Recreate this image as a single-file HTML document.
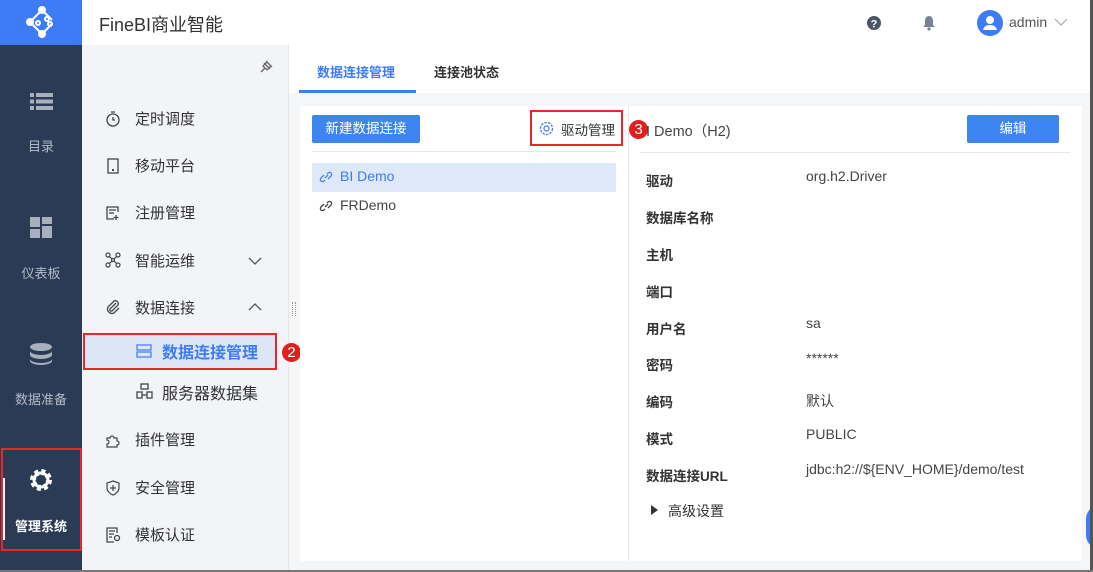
<!DOCTYPE html>
<html><head><meta charset="utf-8"><style>
*{margin:0;padding:0;box-sizing:border-box}
body{width:1093px;height:572px;overflow:hidden;font-family:"Liberation Sans","Noto Sans CJK SC",sans-serif;background:#f5f6f8;position:relative;color:#333}
.abs{position:absolute}
.rail{left:0;top:0;width:82px;height:572px;background:#2b3a55}
.logo{left:0;top:0;width:82px;height:45px;background:#3e7cf6}
.top{left:82px;top:0;width:1011px;height:45px;background:#fff;box-shadow:0 2px 4px rgba(0,0,0,.05)}
.side{left:82px;top:45px;width:207px;height:527px;background:#f2f4f7;border-right:1px solid #e4e6ea}
.rl{position:absolute;width:82px;text-align:center;color:#b3bac6;font-size:13px}
.mi{position:absolute;left:135px;font-size:15px;color:#333}
.ic{position:absolute;left:105px;width:16px;height:16px}
.tabs{left:289px;top:45px;width:804px;height:48px;background:#fff}
.panel{left:300px;top:106px;width:782px;height:455px;background:#fff}
.lab{position:absolute;left:646px;font-size:13.5px;font-weight:bold;color:#333}
.val{position:absolute;left:806px;font-size:14px;color:#444}
.badge{position:absolute;width:19px;height:19px;border-radius:50%;background:#e02020;color:#fff;font-size:15px;text-align:center;line-height:19px}
.red{position:absolute;border:2px solid #e8262b}
</style></head><body>
<div class="abs rail"></div>
<div class="abs logo"><svg width="82" height="45"><g fill="#fff" stroke="#fff" stroke-width="2"><line x1="30" y1="22" x2="42" y2="10"/><line x1="30" y1="22" x2="42" y2="34"/><line x1="42" y1="10" x2="52" y2="20"/><line x1="42" y1="34" x2="52" y2="24"/><circle cx="30" cy="22" r="3"/><circle cx="42" cy="10" r="3"/><circle cx="42" cy="34" r="3"/><circle cx="47" cy="19" r="2" fill="none"/><circle cx="50" cy="24" r="2" fill="none"/><circle cx="38" cy="23" r="2" fill="none"/></g></svg></div>
<div class="abs top"><div class="abs" style="left:17px;top:11px;font-size:18px;color:#333">FineBI商业智能</div>
<svg class="abs" style="left:784px;top:15px" width="16" height="16"><circle cx="8" cy="8" r="7" fill="#4d5566"/><text x="8" y="12.5" text-anchor="middle" font-size="11" font-weight="bold" fill="#fff" font-family="Liberation Sans">?</text></svg>
<svg class="abs" style="left:840px;top:15px" width="14" height="16"><path d="M7 1c-3 0-4 3-4 5v4l-2 2h12l-2-2V6c0-2-1-5-4-5z" fill="#7a8190"/><circle cx="7" cy="14" r="1.6" fill="#7a8190"/></svg>
<svg class="abs" style="left:895px;top:10px" width="26" height="26"><circle cx="13" cy="13" r="13" fill="#3e7cf6"/><circle cx="13" cy="10" r="4" fill="#fff"/><path d="M6 20c1-4 4-5 7-5s6 1 7 5z" fill="#fff"/></svg>
<div class="abs" style="left:927px;top:14px;font-size:14px;color:#555">admin</div>
<svg class="abs" style="left:972px;top:18px" width="14" height="8"><path d="M1 1l6 6 6-6" fill="none" stroke="#aaa" stroke-width="1.2"/></svg>
</div>
<svg class="abs" style="left:30px;top:93px" width="24" height="17" fill="#a9b0bd"><rect x="0" y="0" width="4" height="4"/><rect x="6" y="0" width="17" height="4"/><rect x="0" y="6.5" width="4" height="4"/><rect x="6" y="6.5" width="17" height="4"/><rect x="0" y="13" width="4" height="4"/><rect x="6" y="13" width="17" height="4"/></svg>
<div class="rl" style="top:136px">目录</div>
<svg class="abs" style="left:30px;top:217px" width="22" height="21" fill="#a9b0bd"><rect x="0" y="0" width="10" height="10"/><rect x="12" y="0" width="10" height="7"/><rect x="0" y="12" width="10" height="9"/><rect x="12" y="9" width="10" height="12"/></svg>
<div class="rl" style="top:263px">仪表板</div>
<svg class="abs" style="left:30px;top:343px" width="22" height="22" fill="#a9b0bd"><ellipse cx="11" cy="4" rx="11" ry="4"/><path d="M0 8c0 2 5 4 11 4s11-2 11-4v4c0 2-5 4-11 4S0 14 0 12z"/><path d="M0 16c0 2 5 4 11 4s11-2 11-4v2c0 2-5 4-11 4S0 20 0 18z"/></svg>
<div class="rl" style="top:389px">数据准备</div>
<div class="abs" style="left:2px;top:478px;width:3px;height:62px;background:#fff"></div>
<svg class="abs" style="left:29px;top:468px" width="24" height="24"><circle cx="12" cy="12" r="8" fill="none" stroke="#fff" stroke-width="6" stroke-dasharray="3.5 2.8"/><circle cx="12" cy="12" r="7" fill="none" stroke="#fff" stroke-width="3"/></svg>
<div class="rl" style="top:516px;color:#fff;font-weight:bold">管理系统</div>
<div class="red" style="left:1px;top:448px;width:81px;height:103px"></div>
<div class="badge" style="left:91px;top:488px">1</div>
<div class="abs side"></div>
<svg class="abs" style="left:258px;top:59px" width="16" height="16"><path d="M3 13l4-4M6 4l6 6M8 2l6 6M5 7l4-4 4 4-4 4z" stroke="#666" stroke-width="1.3" fill="none"/></svg>
<svg class="ic" style="top:111px" viewBox="0 0 16 16"><circle cx="8" cy="9" r="6" fill="none" stroke="#444" stroke-width="1.3"/><path d="M8 6v3h2M6 1h4" stroke="#444" stroke-width="1.3" fill="none"/></svg>
<div class="mi" style="top:108px">定时调度</div>
<svg class="ic" style="top:158px" viewBox="0 0 16 16"><rect x="3" y="1" width="10" height="14" fill="none" stroke="#444" stroke-width="1.3"/><rect x="7" y="11" width="2" height="2" fill="#444"/></svg>
<div class="mi" style="top:155px">移动平台</div>
<svg class="ic" style="top:205px" viewBox="0 0 16 16"><path d="M13 7V2H2v12h7M4 5h7M4 8h5M11 10v5M8.5 12.5h5" stroke="#444" stroke-width="1.3" fill="none"/></svg>
<div class="mi" style="top:202px">注册管理</div>
<svg class="ic" style="top:252px" viewBox="0 0 16 16"><g stroke="#444" stroke-width="1.2" fill="none"><circle cx="3" cy="3" r="2"/><circle cx="13" cy="3" r="2"/><circle cx="3" cy="13" r="2"/><circle cx="13" cy="13" r="2"/><circle cx="8" cy="8" r="1.5"/><path d="M4.5 4.5l2.5 2.5M11.5 4.5l-2.5 2.5M4.5 11.5l2.5-2.5M11.5 11.5l-2.5-2.5"/></g></svg>
<div class="mi" style="top:250px">智能运维</div>
<svg class="abs" style="left:248px;top:257px" width="14" height="8"><path d="M1 1l6 6 6-6" fill="none" stroke="#555" stroke-width="1.3"/></svg>
<svg class="ic" style="top:299px" viewBox="0 0 16 16"><path d="M11 4l-6 6a1.5 1.5 0 002 2l6-6a3 3 0 00-4-4L3 8a4.5 4.5 0 006 6l5-5" stroke="#444" stroke-width="1.3" fill="none"/></svg>
<div class="mi" style="top:297px">数据连接</div>
<svg class="abs" style="left:248px;top:303px" width="14" height="8"><path d="M1 7l6-6 6 6" fill="none" stroke="#555" stroke-width="1.3"/></svg>
<div class="abs" style="left:84px;top:334px;width:192px;height:35px;background:#dce6f5"></div>
<div class="red" style="left:83px;top:333px;width:194px;height:37px"></div>
<svg class="abs" style="left:136px;top:344px" width="16" height="14"><rect x="1" y="1" width="14" height="5" fill="none" stroke="#4b82ef" stroke-width="1.3"/><rect x="1" y="8" width="14" height="5" fill="none" stroke="#4b82ef" stroke-width="1.3"/></svg>
<div class="abs" style="left:162px;top:339px;font-size:16px;color:#3e7cf6;font-weight:bold">数据连接管理</div>
<div class="badge" style="left:282px;top:343px">2</div>
<svg class="abs" style="left:136px;top:383px" width="17" height="16" fill="none" stroke="#444" stroke-width="1.3"><rect x="5" y="1" width="7" height="5"/><rect x="1" y="9" width="5" height="6"/><rect x="11" y="9" width="5" height="6"/><path d="M6 12h5"/></svg>
<div class="abs" style="left:162px;top:380px;font-size:16px;color:#333">服务器数据集</div>
<svg class="ic" style="top:432px" viewBox="0 0 16 16"><path d="M2 6h3a2 2 0 114 0h3v3a2 2 0 110 4v2H2v-3a2 2 0 100-4z" stroke="#444" stroke-width="1.2" fill="none"/></svg>
<div class="mi" style="top:429px">插件管理</div>
<svg class="ic" style="top:480px" viewBox="0 0 16 16"><path d="M8 1l6 2v5c0 3-3 6-6 7-3-1-6-4-6-7V3z M8 5v6M5 8h6" stroke="#444" stroke-width="1.2" fill="none"/></svg>
<div class="mi" style="top:477px">安全管理</div>
<svg class="ic" style="top:527px" viewBox="0 0 16 16"><path d="M12 6V1H2v14h7M4 4h6M4 7h5M4 10h3" stroke="#444" stroke-width="1.3" fill="none"/><circle cx="12" cy="11" r="2.5" stroke="#444" stroke-width="1.3" fill="none"/></svg>
<div class="mi" style="top:524px">模板认证</div>
<div class="abs" style="left:292px;top:302px;width:4px;height:14px;border-left:1px dotted #999;border-right:1px dotted #999"></div>
<div class="abs tabs"><div class="abs" style="left:28px;top:17px;font-size:13px;font-weight:bold;color:#3e7cf6">数据连接管理</div>
<div class="abs" style="left:10px;top:45px;width:117px;height:3px;background:#3e7cf6"></div>
<div class="abs" style="left:145px;top:17px;font-size:13px;font-weight:bold;color:#333">连接池状态</div></div>
<div class="abs panel"></div>
<div class="abs" style="left:312px;top:115px;width:108px;height:28px;background:#3d86f2;border-radius:2px;color:#fff;font-size:13.5px;text-align:center;line-height:28px">新建数据连接</div>
<svg class="abs" style="left:538px;top:120px" width="17" height="17"><circle cx="8.5" cy="8.5" r="6" fill="none" stroke="#3e7cf6" stroke-width="1.3" stroke-dasharray="2.5 1.2"/><circle cx="8.5" cy="8.5" r="2.5" fill="none" stroke="#3e7cf6" stroke-width="1.2"/></svg>
<div class="abs" style="left:561px;top:119px;font-size:13.5px;color:#333">驱动管理</div>
<div class="red" style="left:530px;top:110px;width:93px;height:36px"></div>
<div class="abs" style="left:312px;top:151px;width:304px;height:1px;background:#e5e7eb"></div>
<div class="abs" style="left:628px;top:106px;width:1px;height:455px;background:#e5e7eb"></div>
<div class="abs" style="left:312px;top:163px;width:304px;height:29px;background:#dde8f9"></div>
<svg class="abs" style="left:318px;top:169px" width="16" height="16" fill="none" stroke="#4b82ef" stroke-width="1.3"><path d="M7 9l3-3M6 6l-3 3a2 2 0 003 3l1-1M10 10l3-3a2 2 0 00-3-3l-1 1"/></svg>
<div class="abs" style="left:340px;top:168px;font-size:14px;color:#3e7cf6">BI Demo</div>
<svg class="abs" style="left:318px;top:198px" width="16" height="16" fill="none" stroke="#444" stroke-width="1.3"><path d="M7 9l3-3M6 6l-3 3a2 2 0 003 3l1-1M10 10l3-3a2 2 0 00-3-3l-1 1"/></svg>
<div class="abs" style="left:340px;top:197px;font-size:14px;color:#444">FRDemo</div>
<div class="badge" style="left:629px;top:120px">3</div>
<div class="abs" style="left:646px;top:120px;font-size:14.5px;color:#444">I Demo（H2)</div>
<div class="abs" style="left:967px;top:115px;width:92px;height:28px;background:#3d86f2;border-radius:2px;color:#fff;font-size:13.5px;text-align:center;line-height:28px">编辑</div>
<div class="abs" style="left:640px;top:152px;width:430px;height:1px;background:#e5e7eb"></div>
<div class="lab" style="top:170px">驱动</div><div class="val" style="top:168px">org.h2.Driver</div>
<div class="lab" style="top:207px">数据库名称</div>
<div class="lab" style="top:244px">主机</div>
<div class="lab" style="top:281px">端口</div>
<div class="lab" style="top:318px">用户名</div><div class="val" style="top:315px">sa</div>
<div class="lab" style="top:354px">密码</div><div class="val" style="top:350px">******</div>
<div class="lab" style="top:391px">编码</div><div class="val" style="top:391px">默认</div>
<div class="lab" style="top:428px">模式</div><div class="val" style="top:426px">PUBLIC</div>
<div class="lab" style="top:465px">数据连接URL</div><div class="val" style="top:461px">jdbc:h2://${ENV_HOME}/demo/test</div>
<svg class="abs" style="left:651px;top:505px" width="8" height="10"><path d="M0 0l7 5-7 5z" fill="#333"/></svg>
<div class="abs" style="left:668px;top:501px;font-size:14px;color:#333">高级设置</div>
<div class="abs" style="left:1086px;top:505px;width:14px;height:44px;border-radius:14px 0 0 14px;background:#3e7cf6"></div>
<div class="abs" style="left:1090px;top:0;width:3px;height:572px;background:#555"></div>
<div class="abs" style="left:0;top:570px;width:1093px;height:2px;background:#777"></div>
</body></html>
